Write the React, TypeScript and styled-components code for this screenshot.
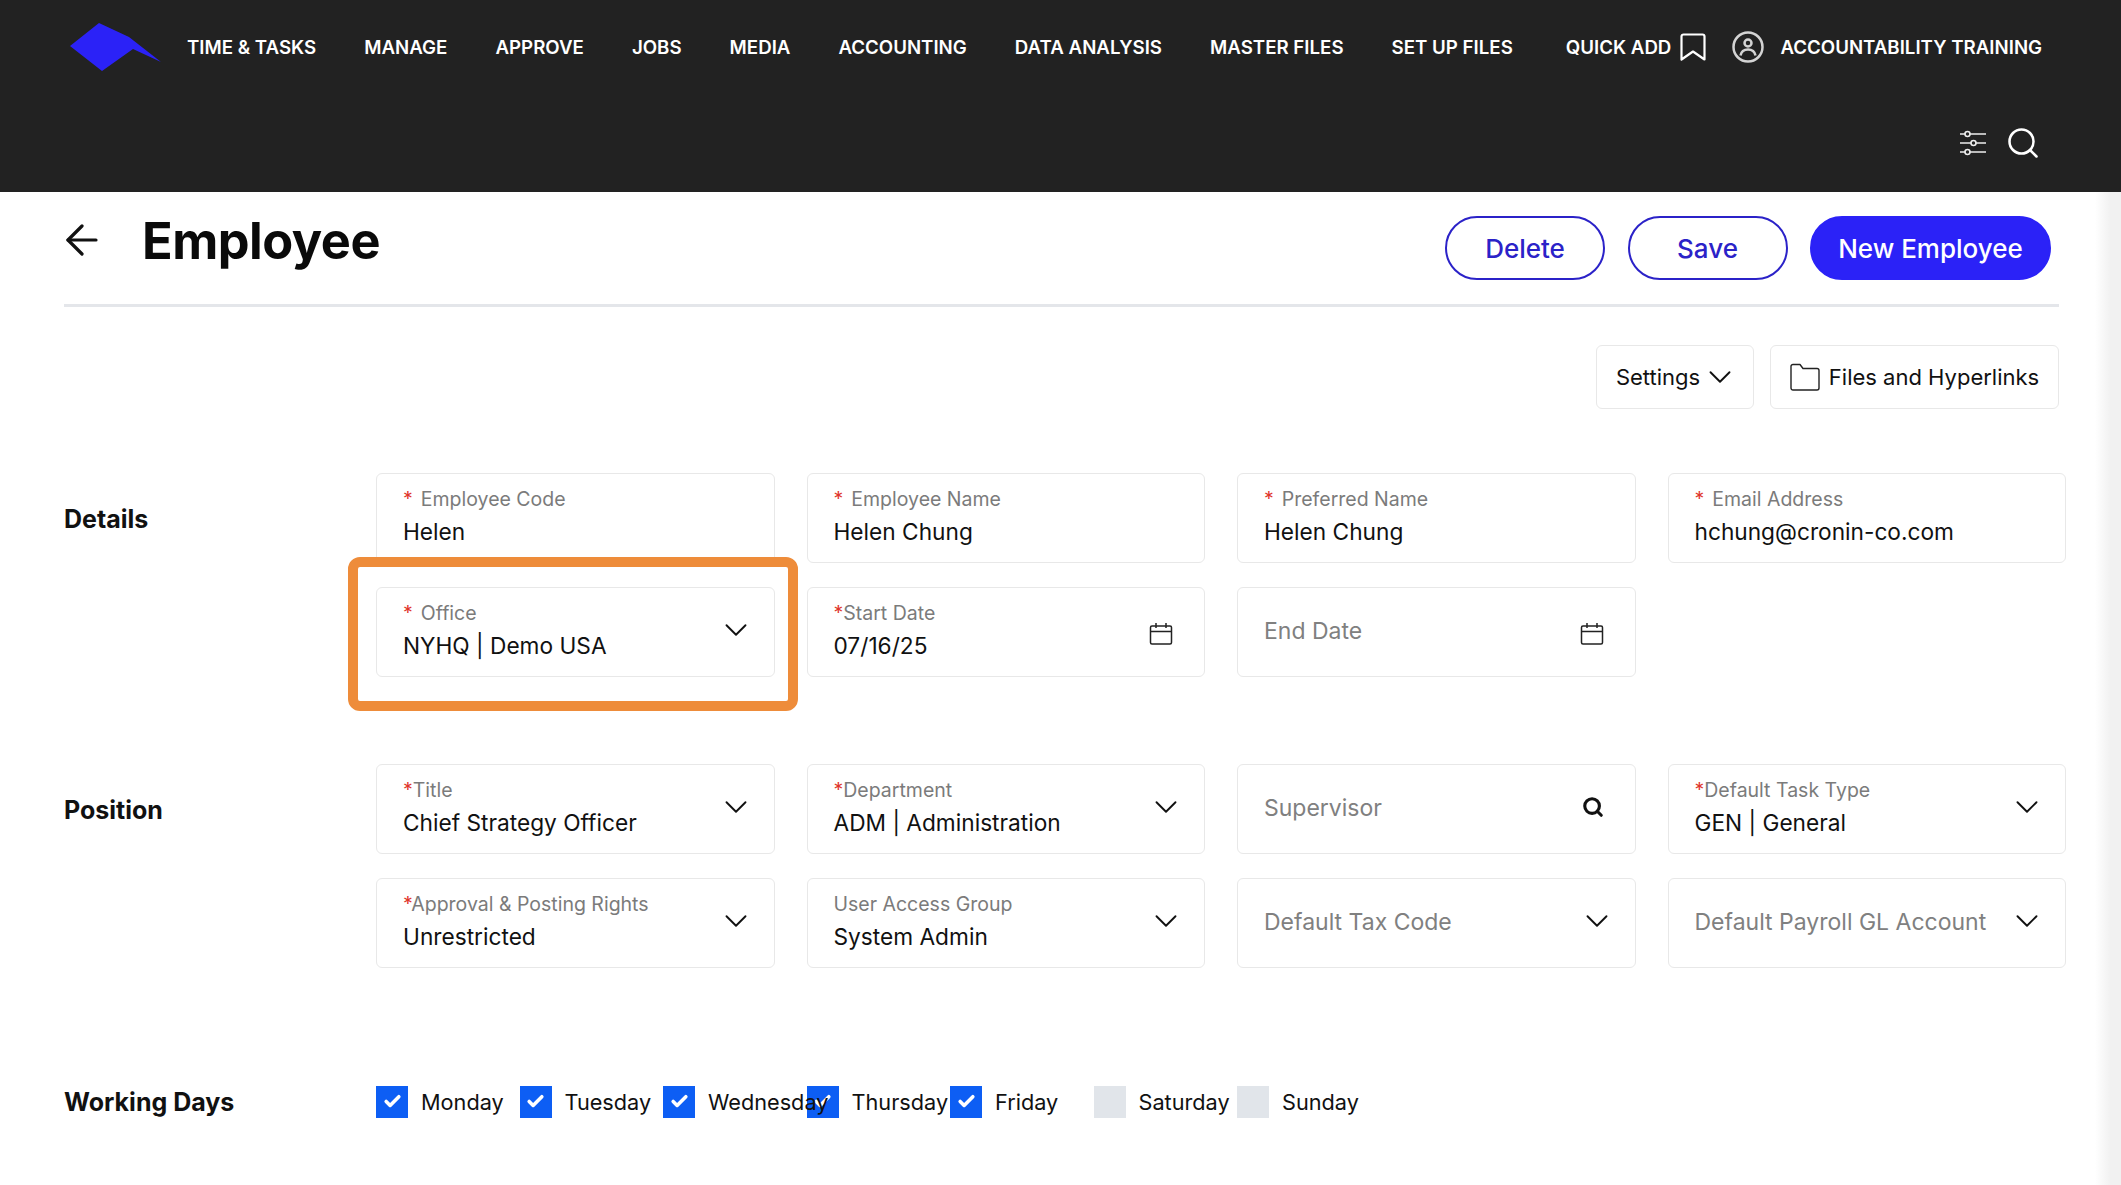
import React from "react";
import styled, { createGlobalStyle } from "styled-components";
import { ArrowLeft, Check, ChevronDown, Search } from "lucide-react";

const navItems = [
  "TIME & TASKS",
  "MANAGE",
  "APPROVE",
  "JOBS",
  "MEDIA",
  "ACCOUNTING",
  "DATA ANALYSIS",
  "MASTER FILES",
  "SET UP FILES",
];

const days = [
  { name: "Monday", on: true },
  { name: "Tuesday", on: true },
  { name: "Wednesday", on: true },
  { name: "Thursday", on: true },
  { name: "Friday", on: true },
  { name: "Saturday", on: false },
  { name: "Sunday", on: false },
];

const Logo = () => (
  <svg width="91" height="48" viewBox="0 0 91 48">
    <polygon points="29,0 59,14 91,39 63,26 32,48 0,23" fill="#2b22f7" />
  </svg>
);

const BookmarkIcon = () => (
  <svg width="26" height="28" viewBox="0 0 26 28" fill="none" stroke="#fff" strokeWidth="2.2" strokeLinejoin="round">
    <path d="M3.500 1.500h19a2 2 0 0 1 2 2v23l-11.500-8-11.500 8v-23a2 2 0 0 1 2-2z" />
  </svg>
);

const UserIcon = () => (
  <svg width="32" height="32" viewBox="0 0 32 32" fill="none" stroke="#d4d4d4" strokeWidth="2.500">
    <circle cx="16" cy="16" r="14.500" />
    <circle cx="16" cy="12" r="3.500" />
    <path d="M8.500 24.500c.8-4 3.600-6 7.500-6s6.700 2 7.500 6" />
  </svg>
);

const SlidersIcon = () => (
  <svg width="28" height="28" viewBox="0 0 28 28" fill="none" stroke="#eee" strokeWidth="1.600">
    <path d="M1 5h5M11 5h16M1 14h11M17 14h10M1 23h5M11 23h16" />
    <circle cx="8.500" cy="5" r="2.500" />
    <circle cx="14.500" cy="14" r="2.500" />
    <circle cx="8.500" cy="23" r="2.500" />
  </svg>
);

const CalendarIcon = () => (
  <svg width="24" height="24" viewBox="0 0 24 24" fill="none" stroke="#222" strokeWidth="1.500">
    <rect x="1.500" y="4" width="21" height="18" rx="1.500" />
    <path d="M1.500 9.500h21M7 1v5M17 1v5" />
  </svg>
);

const FolderIcon = () => (
  <svg width="30" height="28" viewBox="0 0 30 28" fill="none" stroke="#222" strokeWidth="1.400" strokeLinejoin="round">
    <path d="M1 3.500a2 2 0 0 1 2-2h7l3 4h14a2 2 0 0 1 2 2V25a2 2 0 0 1-2 2H3a2 2 0 0 1-2-2z" />
  </svg>
);

type FieldProps = {
  label?: string;
  star?: "spaced" | "tight";
  value?: string;
  placeholder?: string;
  icon?: "chevron" | "calendar" | "search";
  marked?: boolean;
};

const Field = ({ label, star, value, placeholder, icon, marked }: FieldProps) => (
  <FieldBox>
    <FieldText>
      {label && (
        <FieldLabel>
          {star && <Star $spaced={star === "spaced"}>*</Star>}
          {label}
        </FieldLabel>
      )}
      {value && <FieldValue>{value}</FieldValue>}
      {placeholder && <Placeholder>{placeholder}</Placeholder>}
    </FieldText>
    {icon === "chevron" && <WideChevron size={38} strokeWidth={1.200} color="#111" />}
    {icon === "calendar" && (
      <CalendarSlot>
        <CalendarIcon />
      </CalendarSlot>
    )}
    {icon === "search" && (
      <SearchSlot>
        <Search size={22} strokeWidth={3.400} color="#111" />
      </SearchSlot>
    )}
    {marked && <Highlight />}
  </FieldBox>
);

const App = () => (
  <>
    <GlobalStyle />
    <Header>
      <TopRow>
        <LogoSlot>
          <Logo />
        </LogoSlot>
        <Nav>
          {navItems.map((item) => (
            <NavItem key={item}>{item}</NavItem>
          ))}
        </Nav>
        <QuickAdd>
          <NavItem>QUICK ADD</NavItem>
          <BookmarkIcon />
        </QuickAdd>
        <Account>
          <UserIcon />
          <NavItem>ACCOUNTABILITY TRAINING</NavItem>
        </Account>
      </TopRow>
      <IconRow>
        <SlidersIcon />
        <Search size={36} strokeWidth={1.700} color="#fff" />
      </IconRow>
    </Header>
    <Page>
      <Main>
        <TitleRow>
          <BackArrow size={48} strokeWidth={1.600} color="#111" />
          <Title>Employee</Title>
          <Actions>
            <OutlineButton>Delete</OutlineButton>
            <OutlineButton>Save</OutlineButton>
            <PrimaryButton>New Employee</PrimaryButton>
          </Actions>
        </TitleRow>
        <Divider />
        <Toolbar>
          <ToolButton $wide={false}>
            Settings
            <WideChevron size={38} strokeWidth={1.200} color="#111" />
          </ToolButton>
          <ToolButton $wide>
            <FolderIcon />
            Files and Hyperlinks
          </ToolButton>
        </Toolbar>
        <Section $top={64}>
          <SectionLabel>Details</SectionLabel>
          <FieldGrid>
            <Field label="Employee Code" star="spaced" value="Helen" />
            <Field label="Employee Name" star="spaced" value="Helen Chung" />
            <Field label="Preferred Name" star="spaced" value="Helen Chung" />
            <Field label="Email Address" star="spaced" value="hchung@cronin-co.com" />
            <Field label="Office" star="spaced" value="NYHQ | Demo USA" icon="chevron" marked />
            <Field label="Start Date" star="tight" value="07/16/25" icon="calendar" />
            <Field placeholder="End Date" icon="calendar" />
          </FieldGrid>
        </Section>
        <Section $top={87}>
          <SectionLabel>Position</SectionLabel>
          <FieldGrid>
            <Field label="Title" star="tight" value="Chief Strategy Officer" icon="chevron" />
            <Field label="Department" star="tight" value="ADM | Administration" icon="chevron" />
            <Field placeholder="Supervisor" icon="search" />
            <Field label="Default Task Type" star="tight" value="GEN | General" icon="chevron" />
            <Field label="Approval & Posting Rights" star="tight" value="Unrestricted" icon="chevron" />
            <Field label="User Access Group" value="System Admin" icon="chevron" />
            <Field placeholder="Default Tax Code" icon="chevron" />
            <Field placeholder="Default Payroll GL Account" icon="chevron" />
          </FieldGrid>
        </Section>
        <DaysSection>
          <DaysLabel>Working Days</DaysLabel>
          <DaysRow>
            {days.map((day) => (
              <Day key={day.name}>
                <DayBox $on={day.on}>{day.on && <Check size={19} strokeWidth={4.500} color="#fff" />}</DayBox>
                <DayName>{day.name}</DayName>
              </Day>
            ))}
          </DaysRow>
        </DaysSection>
      </Main>
      <Gutter />
    </Page>
  </>
);

const GlobalStyle = createGlobalStyle`
  html, body {
    margin: 0;
    padding: 0;
    height: 100%;
    overflow: hidden;
    background: #fff;
  }
  body {
    font-family: "Inter", "Liberation Sans", sans-serif;
    color: #111;
  }
  * {
    box-sizing: border-box;
  }
`;

const Header = styled.header`
  height: 192px;
  background: #222222;
  color: #fff;
  display: flex;
  flex-direction: column;
`;

const TopRow = styled.div`
  height: 94px;
  padding-left: 70px;
  display: flex;
  align-items: center;
`;

const LogoSlot = styled.div`
  width: 117px;
  display: flex;
`;

const Nav = styled.nav`
  display: flex;
  align-items: center;
  gap: 48px;
  margin-right: 53px;
`;

const NavItem = styled.span`
  font-size: 18.700px;
  font-weight: 600;
  white-space: nowrap;
`;

const QuickAdd = styled.div`
  display: flex;
  align-items: center;
  gap: 9px;
`;

const Account = styled.div`
  display: flex;
  align-items: center;
  gap: 16px;
  margin-left: 26px;
`;

const IconRow = styled.div`
  height: 98px;
  padding-right: 80px;
  display: flex;
  justify-content: flex-end;
  align-items: center;
  gap: 18px;
`;

const Page = styled.div`
  display: flex;
  height: 993px;
`;

const Main = styled.main`
  flex: 1;
  padding: 24px 29px 0 64px;
`;

const Gutter = styled.div`
  width: 26px;
  background: linear-gradient(90deg, #ffffff, #f1f1f1 60%);
`;

const TitleRow = styled.div`
  height: 64px;
  margin-right: 15px;
  display: flex;
  align-items: center;
`;

const BackArrow = styled(ArrowLeft)`
  margin: -16px 0 0 -6px;
`;

const Title = styled.h1`
  margin: -15px 0 0 36px;
  font-size: 50.500px;
  font-weight: 700;
  letter-spacing: -0.500px;
  color: #0a0a0a;
`;

const Actions = styled.div`
  margin-left: auto;
  display: flex;
  gap: 22.500px;
`;

const OutlineButton = styled.button`
  width: 160px;
  height: 64px;
  border: 2px solid #2b22c8;
  border-radius: 32px;
  background: #fff;
  color: #2b22c8;
  font-family: inherit;
  font-size: 26px;
  font-weight: 500;
`;

const PrimaryButton = styled(OutlineButton)`
  width: 241px;
  border-color: #2b22f7;
  background: #2b22f7;
  color: #fff;
`;

const Divider = styled.div`
  height: 3px;
  margin: 24px 7px 0 0;
  background: #e4e6ea;
`;

const Toolbar = styled.div`
  margin: 38px 7px 0 0;
  display: flex;
  justify-content: flex-end;
  gap: 16px;
`;

const ToolButton = styled.div<{ $wide: boolean }>`
  width: ${(p) => (p.$wide ? 289 : 158)}px;
  height: 64px;
  border: 1px solid #e8e8e8;
  border-radius: 6px;
  display: flex;
  align-items: center;
  justify-content: center;
  gap: ${(p) => (p.$wide ? 9 : 6)}px;
  font-size: 22px;
  color: #111;
`;

const Section = styled.section<{ $top: number }>`
  margin-top: ${(p) => p.$top}px;
  display: grid;
  grid-template-columns: 312px 1fr;
`;

const SectionLabel = styled.h2`
  margin: 30px 0 0;
  font-size: 25px;
  line-height: 32px;
  font-weight: 700;
`;

const FieldGrid = styled.div`
  display: grid;
  grid-template-columns: repeat(4, 1fr);
  grid-auto-rows: 90px;
  column-gap: 32px;
  row-gap: 24px;
`;

const FieldBox = styled.div`
  position: relative;
  padding: 0 24px 4px 26px;
  border: 1px solid #e8e8e8;
  border-radius: 6px;
  display: flex;
  align-items: center;
  justify-content: space-between;
`;

const FieldText = styled.div`
  display: flex;
  flex-direction: column;
  gap: 7px;
  white-space: nowrap;
`;

const FieldLabel = styled.div`
  font-size: 19.500px;
  line-height: 24px;
  color: #7b7b7b;
`;

const Star = styled.span<{ $spaced: boolean }>`
  color: #e0352b;
  margin-right: ${(p) => (p.$spaced ? 8 : 0)}px;
`;

const FieldValue = styled.div`
  font-size: 22.700px;
  line-height: 28px;
  color: #111;
`;

const Placeholder = styled.div`
  margin-top: 2px;
  font-size: 23px;
  line-height: 28px;
  color: #808080;
`;

const WideChevron = styled(ChevronDown)`
  margin: 0 -5px;
  flex: none;
`;

const CalendarSlot = styled.div`
  display: flex;
  margin: 7px 7px 0 0;
`;

const SearchSlot = styled.div`
  display: flex;
  margin-right: 7px;
`;

const Highlight = styled.div`
  position: absolute;
  left: -29px;
  right: -24px;
  top: -31px;
  bottom: -35px;
  border: 10px solid #ee8c3a;
  border-radius: 12px;
  pointer-events: none;
`;

const DaysSection = styled.section`
  margin-top: 117px;
  display: grid;
  grid-template-columns: 312px 1fr;
  align-items: center;
`;

const DaysLabel = styled.h2`
  margin: 1px 0 0;
  font-size: 25px;
  line-height: 32px;
  font-weight: 700;
`;

const DaysRow = styled.div`
  display: grid;
  grid-template-columns: repeat(7, 143.500px);
`;

const Day = styled.div`
  display: flex;
  align-items: center;
  gap: 13px;
  font-size: 21.700px;
  white-space: nowrap;
`;

const DayBox = styled.div<{ $on: boolean }>`
  width: 32px;
  height: 32px;
  flex: none;
  display: flex;
  align-items: center;
  justify-content: center;
  background: ${(p) => (p.$on ? "#0d5ef4" : "#e1e5ea")};
`;

const DayName = styled.span`
  position: relative;
  z-index: 1;
`;

export default App;
